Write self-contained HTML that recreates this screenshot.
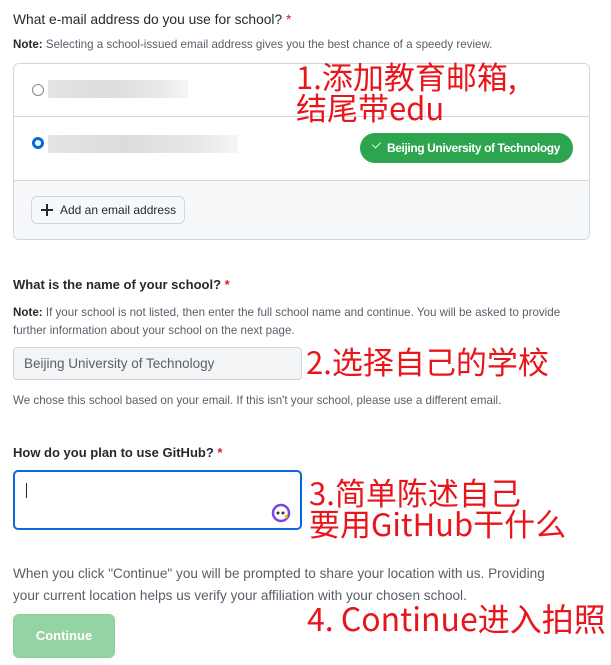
<!DOCTYPE html>
<html><head><meta charset="utf-8"><style>
*{box-sizing:border-box;margin:0;padding:0}
body{width:611px;height:665px;background:#fff;font-family:"Liberation Sans","Noto Sans CJK SC",sans-serif;color:#24292f;position:relative;overflow:hidden}
.abs{position:absolute}
.lbl{font-size:13px;color:#24292f}
.req{color:#cf222e}
.note{font-size:11.6px;color:#57606a}
.note b{color:#24292f;font-weight:bold}
.red{color:#e8151b;font-family:"Noto Sans CJK SC","WenQuanYi Zen Hei",sans-serif;font-weight:400;font-size:31px;line-height:31px;white-space:nowrap}
.blur{background:linear-gradient(90deg,#e4e4e4,#dcdcdc 40%,#e8e8e8 80%,#f6f6f6);height:18px}
</style></head><body>
<div class="abs lbl" style="left:13px;top:12px;font-size:13.8px">What e-mail address do you use for school? <span class="req">*</span></div>
<div class="abs note" style="left:13px;top:38px"><b>Note:</b> Selecting a school-issued email address gives you the best chance of a speedy review.</div>

<div class="abs" style="left:13px;top:63px;width:577px;height:177px;border:1px solid #d0d7de;border-radius:6px;overflow:hidden">
  <div class="abs" style="left:0;top:0;width:100%;height:53px;border-bottom:1px solid #d0d7de;background:#fff"></div>
  <div class="abs" style="left:0;top:116px;width:100%;height:61px;border-top:1px solid #d0d7de;background:#f6f8fa"></div>
  <div class="abs" style="left:18px;top:20px;width:12px;height:12px;border:1px solid #888;border-radius:50%"></div>
  <div class="abs blur" style="left:34px;top:16px;width:140px"></div>
  <div class="abs" style="left:18px;top:73px;width:12px;height:12px;border:3px solid #0969da;border-radius:50%;background:#fff"></div>
  <div class="abs blur" style="left:34px;top:71px;width:190px"></div>
  <div class="abs" style="left:346px;top:69px;width:213px;height:30px;background:#2da44e;border-radius:15px;color:#fff;font-size:12px;font-weight:bold;line-height:30px;padding-left:27px;letter-spacing:-0.4px;white-space:nowrap">Beijing University of Technology</div>
  <div class="abs" style="left:360px;top:76px;width:5px;height:8px;border-right:1.2px solid #cfe;border-bottom:1.2px solid #cfe;transform:rotate(45deg)"></div>
  <div class="abs" style="left:17px;top:132px;width:154px;height:28px;border:1px solid #d0d7de;border-radius:6px;background:#f6f8fa;font-size:12px;line-height:26px;padding-left:28px;color:#24292f;white-space:nowrap">Add an email address</div>
  <div class="abs" style="left:27px;top:145px;width:12px;height:1.8px;background:#24292f"></div>
  <div class="abs" style="left:32.1px;top:140px;width:1.8px;height:12px;background:#24292f"></div>
</div>
<div class="abs red" style="left:296px;top:60px">1.添加教育邮箱,<br>结尾带edu</div>

<div class="abs lbl" style="left:13px;top:277px;font-weight:bold">What is the name of your school? <span class="req">*</span></div>
<div class="abs note" style="left:13px;top:304px;line-height:18px;width:590px"><b>Note:</b> If your school is not listed, then enter the full school name and continue. You will be asked to provide<br>further information about your school on the next page.</div>
<div class="abs" style="left:13px;top:347px;width:289px;height:33px;border:1px solid #d0d7de;border-radius:4px;background:#f3f4f6;font-size:13.5px;line-height:31px;padding-left:10px;color:#57606a">Beijing University of Technology</div>
<div class="red abs" style="left:306px;top:345px">2.选择自己的学校</div>
<div class="abs note" style="left:13px;top:394px">We chose this school based on your email. If this isn't your school, please use a different email.</div>

<div class="abs lbl" style="left:13px;top:445px;font-weight:bold">How do you plan to use GitHub? <span class="req">*</span></div>
<div class="abs" style="left:13px;top:470px;width:289px;height:60px;border:2px solid #0969da;border-radius:5px"></div>
<div class="abs" style="left:26px;top:483px;width:1px;height:15px;background:#24292f"></div>
<svg class="abs" style="left:271px;top:503px" width="20" height="20"><circle cx="10" cy="10" r="8" fill="#fff" stroke="#7a45e6" stroke-width="2.5"/><circle cx="7" cy="10" r="1.5" fill="#333"/><circle cx="12" cy="10" r="1.5" fill="#333"/><path d="M13 13 l4 -2 l-1 5z" fill="#f5c400"/></svg>
<div class="red abs" style="left:309px;top:476px">3.简单陈述自己<br>要用GitHub干什么</div>

<div class="abs" style="left:13px;top:563px;font-size:13.6px;line-height:22px;color:#57606a;width:560px">When you click "Continue" you will be prompted to share your location with us. Providing your current location helps us verify your affiliation with your chosen school.</div>
<div class="abs" style="left:13px;top:614px;width:102px;height:44px;background:#94d3a2;border:1px solid #8ccc9b;border-radius:6px;color:#fff;font-size:13px;font-weight:bold;text-align:center;line-height:42px">Continue</div>
<div class="red abs" style="left:307px;top:603px;font-size:32px">4. Continue进入拍照</div>
</body></html>
